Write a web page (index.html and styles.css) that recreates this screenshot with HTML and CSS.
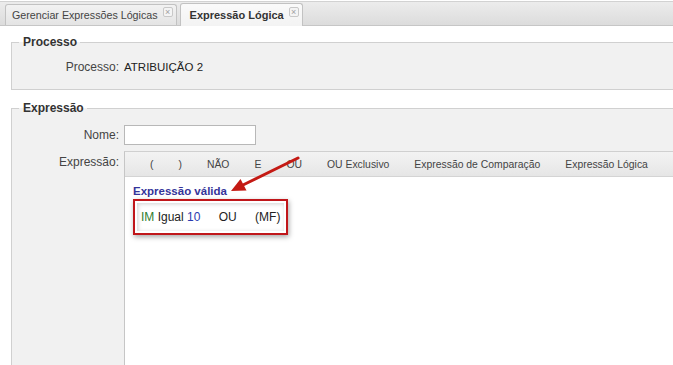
FILE: index.html
```html
<!DOCTYPE html>
<html lang="pt-BR">
<head>
  <meta charset="UTF-8">
  <title>Expressão Lógica</title>
  <link rel="stylesheet" href="styles.css">
</head>
<body>

  <div class="tabs">
    <div class="tab">Gerenciar Expressões Lógicas <span class="fechar">&times;</span></div>
    <div class="tab ativa">Expressão Lógica <span class="fechar">&times;</span></div>
  </div>

  <div class="painel">
    <fieldset class="grupo">
      <legend>Processo</legend>
      <div class="linha">
        <label>Processo:</label>
        <span class="valor">ATRIBUIÇÃO 2</span>
      </div>
    </fieldset>

    <fieldset class="grupo expressao">
      <legend>Expressão</legend>
      <div class="linha">
        <label>Nome:</label>
        <input type="text" class="campo">
      </div>
      <div class="linha editor-linha">
        <label>Expressão:</label>
        <div class="editor">
          <div class="barra">
            <span>(</span>
            <span>)</span>
            <span>NÃO</span>
            <span>E</span>
            <span>OU</span>
            <span>OU Exclusivo</span>
            <span>Expressão de Comparação</span>
            <span>Expressão Lógica</span>
          </div>
          <div class="area">
            <div class="status">Expressão válida</div>
            <div class="resultado">
              <span class="verde">IM</span> Igual <span class="azul">10</span>
              <span class="op">OU</span>
              <span class="op">(MF)</span>
            </div>
          </div>
        </div>
      </div>
    </fieldset>
  </div>

  <!-- seta de anotação -->
  <svg class="seta" width="80" height="45" viewBox="0 0 80 45">
    <line x1="73" y1="6" x2="18" y2="33" stroke="#c41a14" stroke-width="3" stroke-linecap="round"/>
    <polygon points="6,39 15.5,27 21.5,38.5" fill="#c41a14"/>
  </svg>

</body>
</html>
```

FILE: styles.css
```css
body {
  margin: 0;
  width: 673px;
  height: 365px;
  overflow: hidden;
  position: relative;
  background: white;
  font-family: 'Liberation Sans', Arial, sans-serif;
  font-size: 12px;
  color: #333;
}
.tabs {
  display: flex;
  align-items: flex-end;
  gap: 3px;
  height: 23px;
  padding-left: 5px;
  border-top: 1px solid #d2d2d2;
  border-bottom: 1px solid #c6c6c6;
  margin-top: 1px;
  background: linear-gradient(#ececec, #dcdcdc);
}
.tab {
  height: 20px;
  padding: 0 3px 0 6px;
  display: flex;
  align-items: center;
  gap: 5px;
  border: 1px solid #c2c2c2;
  border-bottom: none;
  border-radius: 3px 3px 0 0;
  background: linear-gradient(#f2f2f2, #e4e4e4);
  color: #444;
  font-size: 10.7px;
}
.tab.ativa {
  height: 22px;
  margin-bottom: -1px;
  padding: 0 3px 0 9px;
  background: linear-gradient(#fafafa, #f3f3f3);
  font-weight: bold;
  font-size: 11px;
  color: #333;
}
.fechar {
  display: inline-flex;
  align-items: center;
  justify-content: center;
  width: 8px;
  height: 8px;
  margin-top: -7px;
  border: 1px solid #c8c8c8;
  border-radius: 2px;
  font-size: 9px;
  line-height: 8px;
  font-weight: normal;
  color: #a0a0a0;
  background: #f4f4f4;
}
.painel {
  padding: 9px 0 0 11px;
}
.grupo {
  margin: 0 0 11px 0;
  width: 700px;
  padding: 11px 0 15px 0;
  border: 1px solid #d0d0d0;
  border-right: none;
  background: #f1f1f1;
}
.grupo legend {
  margin-left: 7px;
  padding: 0 3px 0 4px;
  font-weight: bold;
  color: #333;
  font-size: 12px;
}
.linha {
  display: flex;
  align-items: center;
  gap: 5px;
}
.linha label {
  width: 107px;
  text-align: right;
  color: #444;
}
.valor {
  color: #222;
  font-size: 11.5px;
}
.expressao {
  padding-top: 10px;
  padding-bottom: 0;
  height: 300px;
}
.campo {
  width: 130px;
  height: 18px;
  padding: 0;
  border: 1px solid #b8b8b8;
  background: white;
  margin: 0;
}
.editor-linha {
  align-items: flex-start;
  margin-top: 6px;
}
.editor-linha label {
  padding-top: 4px;
}
.editor {
  flex: 1;
  border-left: 1px solid #c6c6c6;
  border-top: 1px solid #d0d0d0;
  background: white;
  height: 300px;
}
.barra {
  display: flex;
  align-items: center;
  gap: 25px;
  height: 24px;
  padding-left: 25px;
  border-bottom: 1px solid #d4d4d4;
  background: linear-gradient(#f3f3f3, #e6e6e6);
  color: #444;
  font-size: 10.4px;
}
.area {
  padding: 8px 0 0 8px;
}
.status {
  color: #34349a;
  font-weight: bold;
  font-size: 11.5px;
}
.resultado {
  display: inline-block;
  margin-top: 2px;
  padding: 9px 6px 9px 6px;
  border: 2px solid #c0161a;
  box-shadow: 1px 2px 5px rgba(0, 0, 0, 0.35), inset 0 0 0 2px white, inset 1px 1px 4px 2px rgba(0, 0, 0, 0.18);
  color: #222;
}
.verde {
  color: #2f7d2f;
}
.azul {
  color: #2b3bb0;
}
.op {
  margin-left: 15px;
}
.seta {
  position: absolute;
  left: 225px;
  top: 152px;
}
```
